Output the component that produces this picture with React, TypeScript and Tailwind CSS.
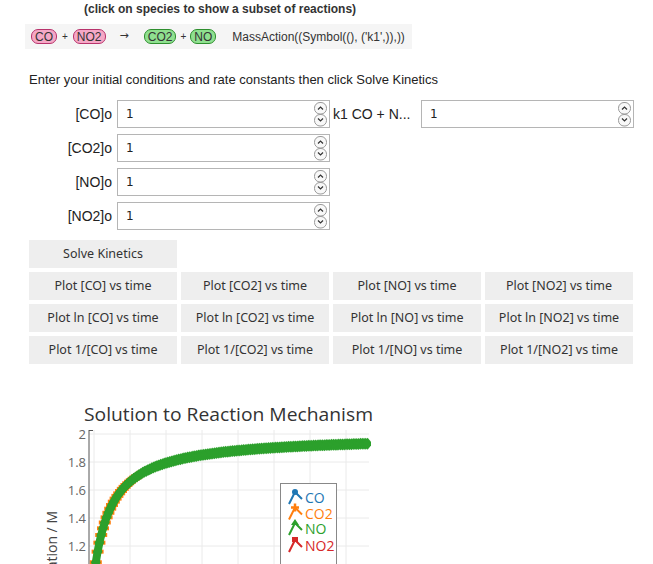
import React from "react";

const Spinner = () => (
  <svg width="13" height="25" viewBox="0 0 13 25" className="absolute right-[2px] top-[1px]">
    <rect x="0.5" y="0.5" width="12" height="11.5" rx="5.5" fill="#f8f8f8" stroke="#9a9a9a" />
    <rect x="0.5" y="12.5" width="12" height="11.5" rx="5.5" fill="#f8f8f8" stroke="#9a9a9a" />
    <path d="M4 7.5 L6.5 5 L9 7.5" fill="none" stroke="#333" strokeWidth="1.2" />
    <path d="M4 16.5 L6.5 19 L9 16.5" fill="none" stroke="#333" strokeWidth="1.2" />
  </svg>
);

const NumInput = () => (
  <div className="relative w-[213px] h-[28px] border border-[#b5b5b5] bg-white flex items-center pl-[8px] text-[12px] text-[#222]" style={{ fontFamily: '"DejaVu Sans", sans-serif' }}>
    1
    <Spinner />
  </div>
);

const Pill = ({ children, green }: { children: React.ReactNode; green?: boolean }) => (
  <span
    className={
      "inline-flex items-center h-[15px] px-[3px] rounded-[7px] border text-[12px] leading-none " +
      (green ? "bg-[#8fe08f] border-[#2f8f2f]" : "bg-[#f5a8c6] border-[#b8336c]")
    }
  >
    {children}
  </span>
);

const rows = ["CO", "CO2", "NO", "NO2"];
const plotRows = [
  ["Plot [CO] vs time", "Plot [CO2] vs time", "Plot [NO] vs time", "Plot [NO2] vs time"],
  ["Plot ln [CO] vs time", "Plot ln [CO2] vs time", "Plot ln [NO] vs time", "Plot ln [NO2] vs time"],
  ["Plot 1/[CO] vs time", "Plot 1/[CO2] vs time", "Plot 1/[NO] vs time", "Plot 1/[NO2] vs time"],
];

const Chart = () => {
  const pts: [number, number][] = [];
  for (let i = 0; i <= 152; i++) {
    const t = i * 0.1;
    const v = 1 + t / (1 + t);
    pts.push([94 + t * 18, 434 + (2 - v) * 140]);
  }
  const poly = pts.map((p) => `${p[0].toFixed(1)},${p[1].toFixed(1)}`).join(" ");
  const hy = [433, 461, 489, 517, 545];
  const labels = ["2", "1.8", "1.6", "1.4", "1.2"];
  const vx = [94, 130, 166, 202, 238, 274, 310, 346];
  const font = '"Open Sans", "DejaVu Sans", sans-serif';
  return (
    <svg width="400" height="174" viewBox="0 390 400 174" className="block">
      <defs>
        <clipPath id="plotclip">
          <rect x="89" y="426" width="282" height="140" />
        </clipPath>
      </defs>
      <text x="84" y="420" fontSize="19" fill="#333" fontFamily={font} textLength="289" lengthAdjust="spacingAndGlyphs">
        Solution to Reaction Mechanism
      </text>
      {hy.map((y) => (
        <line key={y} x1="89" x2="369" y1={y} y2={y} stroke="#eaeaea" strokeWidth="1" />
      ))}
      {vx.map((x) => (
        <line key={x} x1={x} x2={x} y1="429" y2="564" stroke="#eaeaea" strokeWidth="1" />
      ))}
      <line x1="89" x2="89" y1="429" y2="564" stroke="#555" strokeWidth="1" />
      <line x1="89" x2="93" y1="429.5" y2="429.5" stroke="#555" strokeWidth="1" />
      {hy.map((y, i) => (
        <text key={y} x="86" y={y + 4.5} textAnchor="end" fontSize="13" fill="#666" fontFamily={font}>
          {labels[i]}
        </text>
      ))}
      <text
        x="0"
        y="0"
        transform="translate(57 510) rotate(-90)"
        textAnchor="end"
        fontSize="14"
        fill="#444"
        fontFamily={font}
      >
        Concentration / M
      </text>
      <g clipPath="url(#plotclip)">
        {pts.map((p, i) =>
          i < 40 ? (
            <rect key={"o" + i} x={p[0] - 6} y={p[1] - 2} width="12" height="4" fill="#ff7f0e" />
          ) : null
        )}
        <polyline points={poly} fill="none" stroke="#2ca02c" strokeWidth="8" />
        {pts.map((p, i) => (
          <path
            key={"g" + i}
            d={`M${p[0]},${p[1] - 6} L${p[0] + 5},${p[1]} L${p[0]},${p[1] + 6} L${p[0] - 5},${p[1]} Z`}
            fill="#2ca02c"
          />
        ))}
      </g>
      <rect x="280.5" y="482.5" width="56" height="90" fill="white" stroke="#888" strokeWidth="1" />
      {[
        { t: "CO", c: "#1f77b4", y: 497, m: "circle" },
        { t: "CO2", c: "#ff7f0e", y: 512.5, m: "star" },
        { t: "NO", c: "#2ca02c", y: 528, m: "tri" },
        { t: "NO2", c: "#d62728", y: 545, m: "sq" },
      ].map((it) => {
        const x0 = 289;
        const yb = it.y + 6;
        return (
          <g key={it.t}>
            <path
              d={`M${x0},${yb} L${x0 + 6},${yb - 12} L${x0 + 13},${yb - 5}`}
              fill="none"
              stroke={it.c}
              strokeWidth="2"
            />
            {it.m === "circle" && <circle cx={x0 + 6} cy={yb - 12} r="3" fill={it.c} />}
            {it.m === "star" && (
              <path d={`M${x0 + 6},${yb - 16} L${x0 + 6},${yb - 8} M${x0 + 2},${yb - 12} L${x0 + 10},${yb - 12}`} stroke={it.c} strokeWidth="2.5" />
            )}
            {it.m === "tri" && (
              <path d={`M${x0 + 6},${yb - 16} L${x0 + 10},${yb - 10} L${x0 + 2},${yb - 10} Z`} fill={it.c} />
            )}
            {it.m === "sq" && <rect x={x0 + 3} y={yb - 15} width="6" height="5" fill={it.c} />}
            <text x="305" y={it.y + 5} fontSize="14" fill={it.c} fontFamily={font}>
              {it.t}
            </text>
          </g>
        );
      })}
    </svg>
  );
};

export default function App() {
  return (
    <div className="w-[653px] h-[564px] overflow-hidden bg-white text-[#222]" style={{ fontFamily: '"Liberation Sans", Arial, sans-serif' }}>
      <div className="pt-[2px] pl-[84px] h-[17px] text-[12px] font-bold leading-[15px] text-[#333]">
        (click on species to show a subset of reactions)
      </div>
      <div className="mt-[7px] ml-[25px] w-[387px] h-[25px] bg-[#f5f5f5] flex items-center pl-[6px] text-[12px] text-[#333]">
        <Pill>CO</Pill>
        <span className="mx-[5px] text-[10px]">+</span>
        <Pill>NO2</Pill>
        <span className="ml-[14px] mr-[15px] text-[11px]" style={{ fontFamily: '"DejaVu Sans", sans-serif' }}>→</span>
        <Pill green>CO2</Pill>
        <span className="mx-[4px] text-[10px]">+</span>
        <Pill green>NO</Pill>
        <span className="ml-[16px]">MassAction((Symbol((), ('k1',)),))</span>
      </div>
      <div className="mt-[23px] ml-[29px] text-[13px] leading-[16px] text-[#222]">
        Enter your initial conditions and rate constants then click Solve Kinetics
      </div>
      <div className="mt-[12px] flex flex-col gap-[6px]">
        {rows.map((r, i) => (
          <div key={r} className="flex items-center">
            <div className="w-[112px] text-right text-[14px] pr-0">[{r}]o</div>
            <div className="ml-[5px]">
              <NumInput />
            </div>
            {i === 0 && (
              <>
                <div className="w-[91px] pl-[3px] text-[14px] whitespace-nowrap">k1 CO + N...</div>
                <NumInput />
              </>
            )}
          </div>
        ))}
      </div>
      <div className="mt-[10px] ml-[29px] flex flex-col gap-[4px] text-[12.5px] text-[#333]" style={{ fontFamily: '"Noto Sans", sans-serif' }}>
        <div className="w-[148px] h-[28px] bg-[#eeeeee] flex items-center justify-center">Solve Kinetics</div>
        {plotRows.map((row, i) => (
          <div key={i} className="grid grid-cols-[148px_148px_148px_148px] gap-[4px]">
            {row.map((b) => (
              <div key={b} className="h-[28px] bg-[#eeeeee] flex items-center justify-center whitespace-nowrap">
                {b}
              </div>
            ))}
          </div>
        ))}
      </div>
      <div className="mt-[27px]">
        <Chart />
      </div>
    </div>
  );
}
